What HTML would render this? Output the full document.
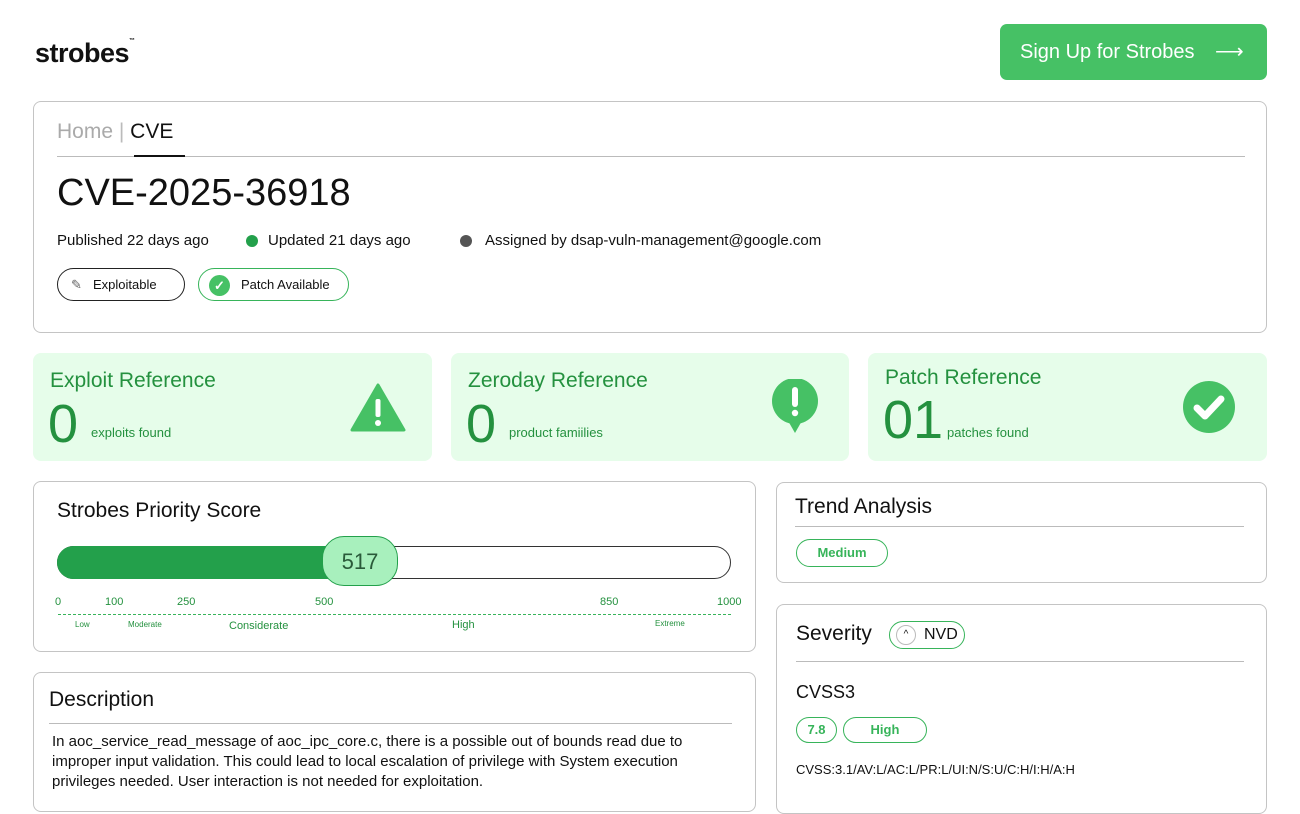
<!DOCTYPE html>
<html><head><meta charset="utf-8"><style>
*{box-sizing:border-box;margin:0;padding:0}
body{width:1300px;height:800px;overflow:hidden;background:#fff;font-family:"Liberation Sans",sans-serif;color:#111;position:relative}
.a{position:absolute}
.box{position:absolute;border:1px solid #c4c4c4;border-radius:8px;background:#fff}
.card{position:absolute;background:#e6fdea;border-radius:8px;color:#24913f}
.card .t{position:absolute;font-size:21px;top:16px;left:17px}
.card .n{position:absolute;font-size:54px;top:40px;left:15px;font-weight:300}
.card .s{position:absolute;font-size:13px;top:72px}
.pill{position:absolute;border:1px solid #37b45a;border-radius:16px;color:#37b45a;font-size:13px;font-weight:bold;text-align:center}
.tk{position:absolute;font-size:11px;color:#24913f;top:596px}
.lb{position:absolute;color:#24913f;top:620px}
</style></head><body>
<div class="a" style="left:35px;top:38px;font-size:27px;font-weight:bold;letter-spacing:-0.5px">strobes<sup style="font-size:6px;vertical-align:top">™</sup></div>
<div class="a" style="left:1000px;top:24px;width:267px;height:56px;background:#46c165;border-radius:7px;color:#fff;font-size:20px;line-height:56px;padding-left:20px">Sign Up for Strobes <span style="position:absolute;left:215px;top:0">⟶</span></div>

<div class="box" style="left:33px;top:101px;width:1234px;height:232px">
<div class="a" style="left:23px;top:18px;font-size:21px;color:#aaa">Home <span style="color:#bbb">|</span> <span style="color:#111">CVE</span></div>
<div class="a" style="left:23px;top:54px;width:1188px;height:1px;background:#bbb"></div>
<div class="a" style="left:100px;top:53px;width:51px;height:2px;background:#111"></div>
<div class="a" style="left:23px;top:70px;font-size:38px">CVE-2025-36918</div>
<div class="a" style="left:23px;top:130px;font-size:15px">Published 22 days ago</div>
<div class="a" style="left:212px;top:133px;width:12px;height:12px;border-radius:6px;background:#23a04b"></div>
<div class="a" style="left:234px;top:130px;font-size:15px">Updated 21 days ago</div>
<div class="a" style="left:426px;top:133px;width:12px;height:12px;border-radius:6px;background:#555"></div>
<div class="a" style="left:451px;top:130px;font-size:15px">Assigned by dsap-vuln-management@google.com</div>
<div class="a" style="left:23px;top:166px;width:128px;height:33px;border:1px solid #222;border-radius:17px;font-size:13px;line-height:31px;padding-left:35px"><span style="position:absolute;left:13px;color:#666">✎</span>Exploitable</div>
<div class="a" style="left:164px;top:166px;width:151px;height:33px;border:1px solid #37b45a;border-radius:17px;font-size:13px;line-height:31px;padding-left:42px"><span style="position:absolute;left:10px;top:6px;width:21px;height:21px;border-radius:11px;background:#46c165;color:#fff;text-align:center;line-height:21px;font-size:13px;font-weight:bold">✓</span>Patch Available</div>
</div>

<div class="card" style="left:33px;top:353px;width:399px;height:108px"><div class="t" style="top:16px">Exploit Reference</div><div class="n">0</div><div class="s" style="left:58px">exploits found</div>
<svg class="a" style="left:317px;top:30px" width="56" height="50" viewBox="0 0 56 50"><path d="M28 2 L54 47 L2 47 Z" fill="#46c165" stroke="#46c165" stroke-width="3" stroke-linejoin="round"/><rect x="25.5" y="16" width="5" height="18" rx="2" fill="#fff"/><circle cx="28" cy="40" r="3" fill="#fff"/></svg></div>
<div class="card" style="left:451px;top:353px;width:398px;height:108px"><div class="t">Zeroday Reference</div><div class="n">0</div><div class="s" style="left:58px">product famiilies</div>
<svg class="a" style="left:320px;top:26px" width="48" height="56" viewBox="0 0 48 56"><circle cx="24" cy="22" r="23" fill="#46c165"/><path d="M16 40 L24 54 L32 40Z" fill="#46c165"/><rect x="21" y="8" width="6" height="20" rx="3" fill="#fff"/><circle cx="24" cy="34" r="3.2" fill="#fff"/></svg></div>
<div class="card" style="left:868px;top:353px;width:399px;height:108px"><div class="t" style="top:13px">Patch Reference</div><div class="n" style="top:36px">01</div><div class="s" style="left:79px">patches found</div>
<svg class="a" style="left:315px;top:28px" width="52" height="52" viewBox="0 0 52 52"><circle cx="26" cy="26" r="26" fill="#46c165"/><path d="M14 27 L22 35 L38 18" fill="none" stroke="#fff" stroke-width="7" stroke-linecap="round" stroke-linejoin="round"/></svg></div>

<div class="box" style="left:33px;top:481px;width:723px;height:171px"></div>
<div class="a" style="left:57px;top:499px;font-size:21px">Strobes Priority Score</div>
<div class="a" style="left:57px;top:546px;width:674px;height:33px;border:1px solid #333;border-radius:17px"></div>
<div class="a" style="left:57px;top:546px;width:290px;height:33px;background:#23a04b;border-radius:17px 0 0 17px"></div>
<div class="a" style="left:322px;top:536px;width:76px;height:50px;background:#a8f0bd;border:1px solid #23a04b;border-radius:22px;text-align:center;line-height:50px;font-size:22px;color:#2a5a3a">517</div>
<div class="tk" style="left:55px">0</div><div class="tk" style="left:105px">100</div><div class="tk" style="left:177px">250</div><div class="tk" style="left:315px">500</div><div class="tk" style="left:600px">850</div><div class="tk" style="left:717px">1000</div>
<div class="a" style="left:58px;top:614px;width:673px;border-top:1px dashed #37b45a"></div>
<div class="lb" style="left:75px;font-size:8px">Low</div><div class="lb" style="left:128px;font-size:8px">Moderate</div><div class="lb" style="left:229px;font-size:11px">Considerate</div><div class="lb" style="left:452px;font-size:11px;top:619px">High</div><div class="lb" style="left:655px;font-size:8px;top:619px">Extreme</div>

<div class="box" style="left:33px;top:672px;width:723px;height:140px"></div>
<div class="a" style="left:49px;top:688px;font-size:21px">Description</div>
<div class="a" style="left:49px;top:723px;width:683px;height:1px;background:#bbb"></div>
<div class="a" style="left:52px;top:732px;width:680px;font-size:15px;line-height:20px">In aoc_service_read_message of aoc_ipc_core.c, there is a possible out of bounds read due to improper input validation. This could lead to local escalation of privilege with System execution privileges needed. User interaction is not needed for exploitation.</div>

<div class="box" style="left:776px;top:482px;width:491px;height:101px"></div>
<div class="a" style="left:795px;top:495px;font-size:21px">Trend Analysis</div>
<div class="a" style="left:795px;top:526px;width:449px;height:1px;background:#bbb"></div>
<div class="pill" style="left:796px;top:539px;width:92px;height:28px;line-height:26px">Medium</div>

<div class="box" style="left:776px;top:604px;width:491px;height:210px"></div>
<div class="a" style="left:796px;top:622px;font-size:21px">Severity</div>
<div class="a" style="left:889px;top:621px;width:76px;height:28px;border:1px solid #37b45a;border-radius:14px;font-size:16px;line-height:26px;padding-left:34px">NVD<span style="position:absolute;left:6px;top:3px;width:20px;height:20px;border:1px solid #bbb;border-radius:10px;font-size:10px;line-height:18px;text-align:center;padding:0">^</span></div>
<div class="a" style="left:796px;top:661px;width:448px;height:1px;background:#bbb"></div>
<div class="a" style="left:796px;top:682px;font-size:18px">CVSS3</div>
<div class="pill" style="left:796px;top:717px;width:41px;height:26px;line-height:24px">7.8</div>
<div class="pill" style="left:843px;top:717px;width:84px;height:26px;line-height:24px">High</div>
<div class="a" style="left:796px;top:762px;font-size:13px">CVSS:3.1/AV:L/AC:L/PR:L/UI:N/S:U/C:H/I:H/A:H</div>
</body></html>
